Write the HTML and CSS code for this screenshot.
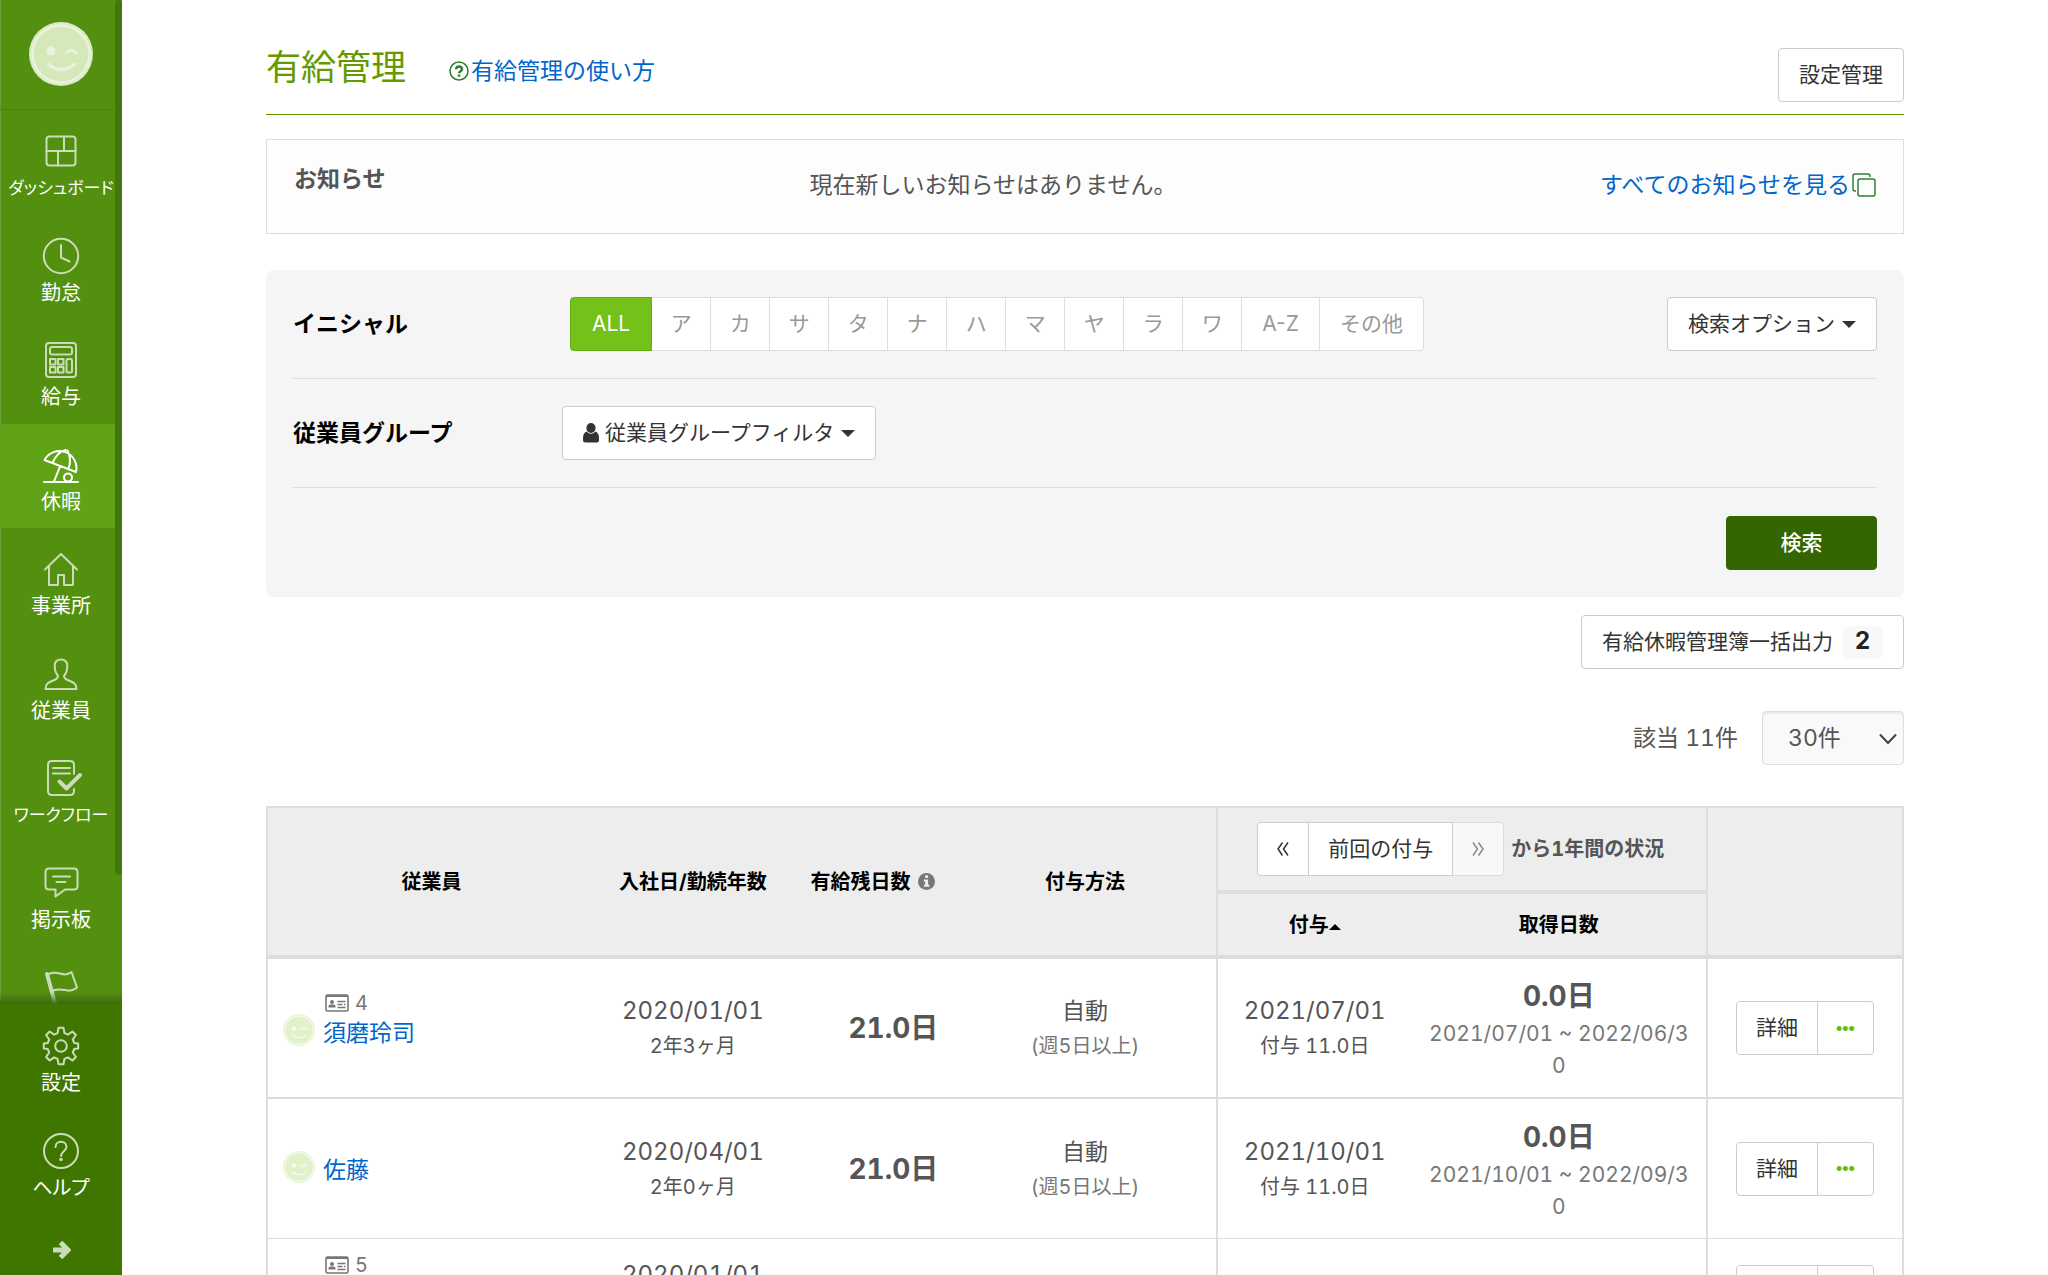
FILE: index.html
```html
<!DOCTYPE html>
<html lang="ja">
<head>
<meta charset="utf-8">
<title>有給管理</title>
<meta name="viewport" content="width=device-width, initial-scale=1">
<link rel="stylesheet" href="styles.css">
</head>
<body>
<svg class="sprite" aria-hidden="true">
  <symbol id="face" viewBox="0 0 64 64">
    <circle cx="32" cy="32" r="32" fill="var(--face-rim)"/>
    <circle cx="32" cy="32" r="28.500" fill="var(--face-fill)" stroke="var(--face-line)" stroke-width="2.500"/>
    <circle cx="22" cy="29" r="4.500" fill="var(--face-line)"/>
    <path d="M37 31q5-5 10 0M19 42q13 11 27 0" fill="none" stroke="var(--face-line)" stroke-width="3" stroke-linecap="round"/>
  </symbol>
  <symbol id="card" viewBox="0 0 24 18">
    <rect x="1" y="1" width="22" height="16" rx="1.500" fill="none" stroke="currentColor" stroke-width="1.600"/>
    <path d="M1 1h22v2H1z" fill="currentColor"/>
    <circle cx="7" cy="8" r="2" fill="currentColor"/>
    <path d="M3.500 13.500v-1.500q0-1.500 2-1.500h3q2 0 2 1.500v1.500z" fill="currentColor"/>
    <path d="M12.500 7.500h8M12.500 10.500h5M19 10.500h1.500M12.500 13.500h8" stroke="currentColor" stroke-width="1.300" fill="none"/>
  </symbol>
</svg>
<div class="app">
  <aside class="sidebar">
    <a class="profile" href="#" aria-label="プロフィール"><svg class="profile-face"><use href="#face"/></svg></a>
    <nav class="nav">
      <a class="nav-item compact" href="#"><svg class="nav-icon" viewBox="0 0 36 36"><rect x="3.500" y="3.500" width="29" height="29" rx="3"/><path d="M3.500 18h29M21 3.500V18M15 18v14.500"/></svg><span>ダッシュボード</span></a>
      <a class="nav-item" href="#"><svg class="nav-icon" viewBox="0 0 36 36"><circle cx="18" cy="18" r="17.200"/><path d="M18 7v12.500l8.500 4"/></svg><span>勤怠</span></a>
      <a class="nav-item" href="#"><svg class="nav-icon" viewBox="0 0 36 36"><rect x="3" y="1" width="30" height="34" rx="3"/><rect x="7" y="5" width="22" height="7.500" rx="2"/><rect x="7" y="17" width="5.500" height="5.500"/><rect x="15" y="17" width="5.500" height="5.500"/><rect x="7" y="25" width="5.500" height="5.500"/><rect x="15" y="25" width="5.500" height="5.500"/><rect x="23.500" y="17" width="5.500" height="13.500" rx="1.500"/></svg><span>給与</span></a>
      <a class="nav-item is-active" href="#" aria-current="page"><svg class="nav-icon" viewBox="0 0 36 36"><path d="M1.500 13A17 17 0 0 1 33 25zM9.500 16Q14 5 22.500 3M24.500 3.500Q29 12 25.500 22M17 19.500L11 34.500M1 35h34"/><circle cx="25" cy="30.500" r="4"/></svg><span>休暇</span></a>
      <a class="nav-item" href="#"><svg class="nav-icon" viewBox="0 0 36 36"><path d="M2 18.500L18 3l16 15.500M6 15.500V34h9V24h6v10h9V15.500"/></svg><span>事業所</span></a>
      <a class="nav-item" href="#"><svg class="nav-icon" viewBox="0 0 36 36"><path d="M2.500 33c0-6 4-7 9-9 3-1.200 3.500-2 3.500-4-2.500-3-3.300-5.500-3.300-10 0-4 2-6.500 6.300-6.500s6.300 2.500 6.300 6.500c0 4.500-.8 7-3.300 10 0 2 .5 2.800 3.500 4 5 2 9 3 9 9z"/></svg><span>従業員</span></a>
      <a class="nav-item compact" href="#"><svg class="nav-icon" viewBox="0 0 36 36"><path d="M31 14V5q0-4-4-4H9Q5 1 5 5v26q0 4 4 4h18q4 0 4-4v-2M10 8h17M10 13.500h17"/><path class="bold" d="M16.500 21.500l7 7L37 15"/></svg><span>ワークフロー</span></a>
      <a class="nav-item" href="#"><svg class="nav-icon" viewBox="0 0 36 36"><path d="M6 3.500h25q3.500 0 3.500 3.500v14q0 3.500-3.500 3.500H22L12.500 31.500V24.500H6Q2.500 24.500 2.500 21V7Q2.500 3.500 6 3.500zM10 11.500h17M13.500 17h9"/></svg><span>掲示板</span></a>
      <a class="nav-item" href="#" aria-label="フラグ"><svg class="nav-icon" viewBox="0 0 36 36"><path class="bold" d="M4 5l9 33"/><path d="M6 5C15 .5 20 9.500 28.500 3L34 18.500C26 25.500 20 17.500 10.500 21.500"/></svg></a>
      <span class="nav-shade"></span>
    </nav>
    <div class="side-foot">
      <a class="nav-item" href="#"><svg class="nav-icon" viewBox="0 1 36 36"><path d="M15.500 0.800h5l1 5.400 3.400 1.400 4.500-3.100 3.500 3.500-3.100 4.500 1.400 3.400 4 .6v5l-4 .6-1.400 3.400 3.100 4.500-3.500 3.500-4.500-3.100-3.400 1.400-1 5.400h-5l-1-5.400-3.400-1.400-4.500 3.100L3.100 30l3.100-4.500-1.400-3.400-4-.6v-5l4-.6 1.400-3.400L3.100 8l3.500-3.500 4.500 3.100 3.400-1.400z"/><circle cx="18" cy="19" r="5.800"/></svg><span>設定</span></a>
      <a class="nav-item" href="#"><svg class="nav-icon" viewBox="0 0 36 36"><circle cx="18" cy="18" r="17"/><path d="M12.500 14c0-7 11-7 11 0 0 4-5.500 4.500-5.500 9"/><circle class="dot" cx="18" cy="26.500" r="1.800"/></svg><span>ヘルプ</span></a>
      <button class="expand" type="button" aria-label="メニューを広げる"><svg viewBox="0 0 20 20"><path d="M2 10h15M9.500 2.500L17 10l-7.500 7.500"/></svg></button>
    </div>
    <span class="side-thumb"></span>
  </aside>

  <main class="main">
    <header class="page-head">
      <h1>有給管理</h1>
      <a class="guide" href="#"><svg viewBox="0 0 20 20"><circle cx="10" cy="10" r="9"/><path class="mark" d="M7.200 8.300c0-3.800 5.800-3.800 5.800 0 0 2-2.900 2-2.900 4M10.100 13.600v2.200"/></svg>有給管理の使い方</a>
      <button class="btn head-btn" type="button">設定管理</button>
    </header>

    <section class="notice">
      <h2>お知らせ</h2>
      <p>現在新しいお知らせはありません。</p>
      <a href="#">すべてのお知らせを見る<svg viewBox="0 0 24 24"><rect x="6" y="6" width="17" height="17" rx="2"/><path d="M4 18H3q-2 0-2-2V3q0-2 2-2h13q2 0 2 2v1"/></svg></a>
    </section>

    <form class="filter">
      <div class="filter-row">
        <span class="filter-label">イニシャル</span>
        <div class="initials btn-group">
          <button class="is-on" type="button">ALL</button><button type="button">ア</button><button type="button">カ</button><button type="button">サ</button><button type="button">タ</button><button type="button">ナ</button><button type="button">ハ</button><button type="button">マ</button><button type="button">ヤ</button><button type="button">ラ</button><button type="button">ワ</button><button class="wide" type="button">A-Z</button><button class="wide" type="button">その他</button>
        </div>
        <button class="btn push" type="button">検索オプション<i class="caret"></i></button>
      </div>
      <div class="filter-row">
        <span class="filter-label">従業員グループ</span>
        <button class="btn" type="button"><svg class="person" viewBox="0 0 16 20"><ellipse cx="8" cy="5" rx="4.600" ry="5"/><path d="M3.500 8.500Q8 13 12.500 8.500 16 10 16 15v2q0 2.500-2.500 2.500h-11Q0 19.500 0 17v-2Q0 10 3.500 8.500z"/></svg>従業員グループフィルタ<i class="caret"></i></button>
      </div>
      <div class="filter-row">
        <button class="btn btn-search push" type="button">検索</button>
      </div>
    </form>

    <div class="export"><button class="btn" type="button">有給休暇管理簿一括出力<span class="badge">2</span></button></div>

    <div class="count">
      <label for="per-page">該当 11件</label>
      <span class="select"><select id="per-page"><option>30件</option></select><svg viewBox="0 0 18 12"><path d="M1 1.500l8 8.500 8-8.500"/></svg></span>
    </div>

    <table class="grid">
      <colgroup><col class="w20"><col class="w12"><col class="w10"><col class="w16"><col class="w12"><col class="w18"><col class="w12"></colgroup>
      <thead>
        <tr>
          <th rowspan="2">従業員</th>
          <th rowspan="2">入社日/勤続年数</th>
          <th rowspan="2"><span class="with-icon">有給残日数<svg viewBox="0 0 18 18"><circle cx="9" cy="9" r="9"/><path d="M7.500 2.500h3.200v2.800H7.500zM6.200 7h4.500v5.500H12v2H6.200v-2h1.300V9H6.200z"/></svg></span></th>
          <th rowspan="2">付与方法</th>
          <th class="edge period" colspan="2">
            <div class="period-bar">
              <div class="btn-group pager"><button type="button" aria-label="前へ"><svg viewBox="0 0 14 16"><path d="M6.500 1.500L2 8l4.500 6.500M12 1.500L7.500 8l4.500 6.500"/></svg></button><button type="button">前回の付与</button><button type="button" disabled aria-label="次へ"><svg viewBox="0 0 14 16"><path d="M2 1.500L6.500 8 2 14.500M7.500 1.500L12 8l-4.500 6.500"/></svg></button></div>
              <span>から1年間の状況</span>
            </div>
          </th>
          <th class="edge" rowspan="2" aria-label="操作"></th>
        </tr>
        <tr>
          <th class="edge sub">付与<i class="caret up"></i></th>
          <th class="sub">取得日数</th>
        </tr>
      </thead>
      <tbody>
        <tr class="thick">
          <td class="who"><div class="has-code"><svg class="face"><use href="#face"/></svg><div><span class="code"><svg><use href="#card"/></svg>4</span><a href="#">須磨玲司</a></div></div></td>
          <td><span class="date">2020/01/01</span><span class="small">2年3ヶ月</span></td>
          <td class="left-days"><strong>21.0日</strong></td>
          <td><span class="kind">自動</span><span class="small muted">(週5日以上)</span></td>
          <td class="edge"><span class="date">2021/07/01</span><span class="small">付与 11.0日</span></td>
          <td class="taken"><strong>0.0日</strong><span class="range">2021/07/01 ~ 2022/06/30</span></td>
          <td class="edge"><div class="btn-group actions"><button type="button">詳細</button><button type="button" aria-label="その他の操作"><i class="dots"></i></button></div></td>
        </tr>
        <tr>
          <td class="who"><div><svg class="face"><use href="#face"/></svg><div><a href="#">佐藤</a></div></div></td>
          <td><span class="date">2020/04/01</span><span class="small">2年0ヶ月</span></td>
          <td class="left-days"><strong>21.0日</strong></td>
          <td><span class="kind">自動</span><span class="small muted">(週5日以上)</span></td>
          <td class="edge"><span class="date">2021/10/01</span><span class="small">付与 11.0日</span></td>
          <td class="taken"><strong>0.0日</strong><span class="range">2021/10/01 ~ 2022/09/30</span></td>
          <td class="edge"><div class="btn-group actions"><button type="button">詳細</button><button type="button" aria-label="その他の操作"><i class="dots"></i></button></div></td>
        </tr>
        <tr class="short">
          <td class="who"><span class="code"><svg><use href="#card"/></svg>5</span></td>
          <td class="joined"><span class="date">2020/01/01</span></td>
          <td></td>
          <td></td>
          <td class="edge"></td>
          <td></td>
          <td class="edge"><div class="btn-group actions"><button type="button" aria-label="詳細"></button><button type="button" aria-label="その他の操作"></button></div></td>
        </tr>
      </tbody>
    </table>
  </main>
</div>
</body>
</html>
```
FILE: styles.css
```css
* { box-sizing: border-box; }

body {
  margin: 0;
  font-family: Inter, "Noto Sans CJK JP", sans-serif;
  font-size: 21px;
  line-height: 32px;
  color: #555;
  background: #fff;
}

a { color: #06c; text-decoration: none; }
h1, h2, p { margin: 0; }
button, select { font: inherit; color: inherit; margin: 0; }
button { cursor: pointer; }
svg { display: block; flex: none; }
.sprite { position: absolute; width: 0; height: 0; }

.app { display: flex; height: 100vh; overflow: hidden; }

/* Sidebar */
.sidebar {
  position: relative;
  display: flex;
  flex-direction: column;
  flex: none;
  width: 122px;
  background: #539010;
  box-shadow: inset 1px 0 #69a03c;
}
.profile {
  display: flex;
  justify-content: center;
  flex: none;
  height: 110px;
  padding-top: 22px;
  border-bottom: 1px solid #4a820e;
}
.profile-face {
  width: 64px;
  height: 64px;
  --face-rim: #dcebc6;
  --face-fill: #d5e8b9;
  --face-line: #e9f2dc;
}
.nav { position: relative; flex: 1; min-height: 0; overflow: hidden; }
.nav-item {
  display: flex;
  flex-direction: column;
  align-items: center;
  gap: 6px;
  height: 104px;
  padding-top: 23px;
  color: #fff;
  font-size: 20px;
  line-height: 26px;
  white-space: nowrap;
  font-feature-settings: "palt";
}
.nav-item.compact { font-size: 17px; }
.nav-item:nth-child(odd) { height: 105px; }
.nav-item.is-active { background: #61a316; }
.nav-icon {
  width: 36px;
  height: 36px;
  overflow: visible;
  fill: none;
  stroke: #cbdcb8;
  stroke-width: 2;
  stroke-linejoin: round;
  stroke-linecap: round;
}
.is-active .nav-icon { stroke: #fff; }
.nav-icon .bold { stroke-width: 4; }
.nav-icon .dot { fill: #cbdcb8; stroke: none; }
.nav-shade {
  position: absolute;
  inset: auto 0 0;
  height: 12px;
  background: linear-gradient(rgba(60, 106, 16, 0), #3c6a10);
}
.side-foot { flex: none; height: 271px; padding-top: 1px; background: #3f7600; }
.expand {
  display: block;
  width: 100%;
  padding: 26px 0 16px;
  border: 0;
  background: none;
}
.expand svg {
  width: 20px;
  height: 20px;
  margin: 0 auto;
  fill: none;
  stroke: #cbdcb8;
  stroke-width: 5;
}
.side-thumb {
  position: absolute;
  top: 0;
  right: 0;
  width: 7px;
  height: 875px;
  border-radius: 4px;
  background: #43760f;
}

/* Page */
.main { flex: 1; min-width: 0; padding: 0 144px; overflow: hidden; }

.page-head {
  display: flex;
  align-items: flex-start;
  height: 115px;
  border-bottom: 1px solid #690;
}
.page-head h1 {
  margin-top: 42px;
  font-size: 35px;
  font-weight: 400;
  line-height: 50px;
  color: #690;
}
.guide {
  display: flex;
  align-items: center;
  gap: 2px;
  margin: 55px 0 0 43px;
  font-size: 23px;
}
.guide svg { width: 20px; height: 20px; fill: none; stroke: #2f7d32; stroke-width: 1.5; }
.guide .mark { stroke-width: 2.5; }
.head-btn { margin: 48px 0 0 auto; }

.btn {
  display: inline-flex;
  align-items: center;
  height: 54px;
  padding: 0 20px;
  border: 1px solid #ccc;
  border-radius: 4px;
  background: #fff;
  color: #333;
}
.caret {
  display: inline-block;
  margin-left: 7px;
  border: 7px solid transparent;
  border-top: 7px solid currentColor;
  border-bottom: 0;
}
.caret.up {
  margin-left: 0;
  border-width: 0 6px 6px;
  border-style: solid;
  border-color: transparent transparent currentColor;
  vertical-align: 2px;
}

.notice {
  display: grid;
  grid-template-columns: 1fr auto 1fr;
  height: 95px;
  margin-top: 24px;
  padding: 23px 27px;
  border: 1px solid #ddd;
  background: #fdfdfd;
  font-size: 23px;
}
.notice h2 { font-size: 23px; }
.notice p { padding: 6px 184px 0 0; }
.notice a {
  display: flex;
  justify-content: flex-end;
  align-items: center;
  height: 32px;
  margin-top: 6px;
  gap: 2px;
}
.notice svg { width: 24px; height: 24px; fill: none; stroke: #2f7d32; stroke-width: 1.5; }

.filter {
  margin-top: 36px;
  padding: 0 27px;
  border-radius: 8px;
  background: #f5f5f5;
}
.filter-row {
  display: flex;
  align-items: center;
  padding: 27px 0;
  border-bottom: 1px solid #ddd;
}
.filter-row:last-child { padding-top: 28px; border-bottom: 0; }
.filter-label {
  width: 269px;
  font-size: 23px;
  font-weight: 700;
  color: #000;
}
.push { margin-left: auto; }
.initials { margin-left: 8px; }
.person { width: 16px; height: 20px; margin-right: 6px; fill: #333; }
.btn-search {
  justify-content: center;
  width: 151px;
  border-color: #360;
  background: #360;
  color: #fff;
  font-weight: 500;
}

.btn-group { display: inline-flex; }
.btn-group button {
  display: flex;
  align-items: center;
  justify-content: center;
  height: 54px;
  margin-left: -1px;
  padding: 0 19px;
  border: 1px solid #ccc;
  background: #fff;
  color: #333;
}
.btn-group button:first-child { margin-left: 0; border-radius: 4px 0 0 4px; }
.btn-group button:last-child { border-radius: 0 4px 4px 0; }
.initials button { min-width: 60px; padding: 0 18px; border-color: #ddd; color: #999; }
.initials .wide { padding: 0 20px; }
.initials .is-on {
  position: relative;
  padding: 0 21px;
  border-color: #65ab14;
  background: #73c119;
  color: #fff;
}

.export { display: flex; justify-content: flex-end; margin-top: 18px; }
.badge {
  width: 41px;
  height: 33px;
  margin-left: 9px;
  border-radius: 6px;
  background: #f8f8f8;
  color: #222;
  font-size: 24px;
  font-weight: 700;
  line-height: 30px;
  text-align: center;
}

.count {
  display: flex;
  justify-content: flex-end;
  align-items: center;
  gap: 24px;
  margin-top: 42px;
  font-size: 23px;
  font-variant-numeric: tabular-nums;
}
.select { position: relative; }
.select select {
  display: block;
  width: 142px;
  height: 54px;
  padding: 0 25px;
  border: 1px solid #ddd;
  border-radius: 4px;
  background: #f9f9f9;
  box-shadow: inset 0 2px 2px rgba(0, 0, 0, .06);
  appearance: none;
}
.select svg {
  position: absolute;
  top: 22px;
  right: 7px;
  width: 18px;
  height: 12px;
  fill: none;
  stroke: #444;
  stroke-width: 2;
  pointer-events: none;
}

/* Leave table */
.grid {
  width: 100%;
  margin-top: 41px;
  border: 2px solid #ddd;
  border-spacing: 0;
  table-layout: fixed;
  text-align: center;
  font-variant-numeric: tabular-nums;
}
.w10 { width: 10%; }
.w12 { width: 12%; }
.w16 { width: 16%; }
.w18 { width: 18%; }
.w20 { width: 20%; }
.grid th {
  height: 65px;
  padding: 0;
  background: #ededed;
  border-bottom: 4px solid #ddd;
  color: #000;
  font-size: 20px;
}
.grid .period { height: 86px; color: #555; }
.grid .edge { border-left: 2px solid #ddd; }
.with-icon { display: inline-flex; align-items: center; gap: 7px; }
.with-icon svg { width: 17px; height: 17px; fill: #777; }
.with-icon path { fill: #ededed; }
.period-bar { display: flex; align-items: center; justify-content: center; gap: 7px; padding-right: 2px; }
.pager { font-size: 21px; font-weight: 400; }
.pager svg { width: 14px; height: 16px; fill: none; stroke: #333; stroke-width: 1.5; }
.pager button:first-child, .pager button:last-child { padding: 0 18px; }
.pager button:disabled { border-color: #ddd; border-left-color: #ccc; background: #f8f8f8; }
.pager button:disabled svg { stroke: #888; }

.grid td { height: 140px; padding: 0 16px; border-bottom: 1px solid #ddd; }
.grid .thick td { border-bottom-width: 2px; }
.grid .short td { height: 106px; }
.grid .short .joined { padding-bottom: 34px; }
.grid td > span { display: block; }
.date { font-size: 24px; line-height: 36px; }
.kind { font-size: 23px; line-height: 36px; }
.small { font-size: 20px; line-height: 34px; }
.muted, .range, .code { color: #777; }
.grid strong { display: block; font-size: 28px; line-height: 36px; }
.grid .left-days { text-align: right; }
.grid .taken { padding-top: 4px; }
.taken strong { margin-bottom: 4px; }
.range { word-break: break-all; }

.grid .who { padding: 0 15px; text-align: left; }
.who > div { display: flex; align-items: flex-end; gap: 8px; }
.who > .has-code { padding-bottom: 18px; }
.who a { display: block; font-size: 23px; line-height: 32px; }
.face {
  width: 32px;
  height: 32px;
  margin-bottom: 3px;
  --face-rim: #e6f3d5;
  --face-fill: #e1f1ca;
  --face-line: #f6fbef;
}
.grid .code {
  display: flex;
  align-items: center;
  gap: 6px;
  padding-left: 2px;
  font-size: 20px;
  line-height: 28px;
}
.code svg { width: 24px; height: 18px; }
.grid .short .who { padding: 0 0 54px 55px; }

.actions { vertical-align: middle; }
.actions button:first-child { min-width: 82px; }
.actions button:last-child { min-width: 57px; padding: 0 18px; }
.dots {
  width: 19px;
  height: 5px;
  background: radial-gradient(circle, #6b1 2px, transparent 3px) 0 0 / 33% 100%;
}
```
